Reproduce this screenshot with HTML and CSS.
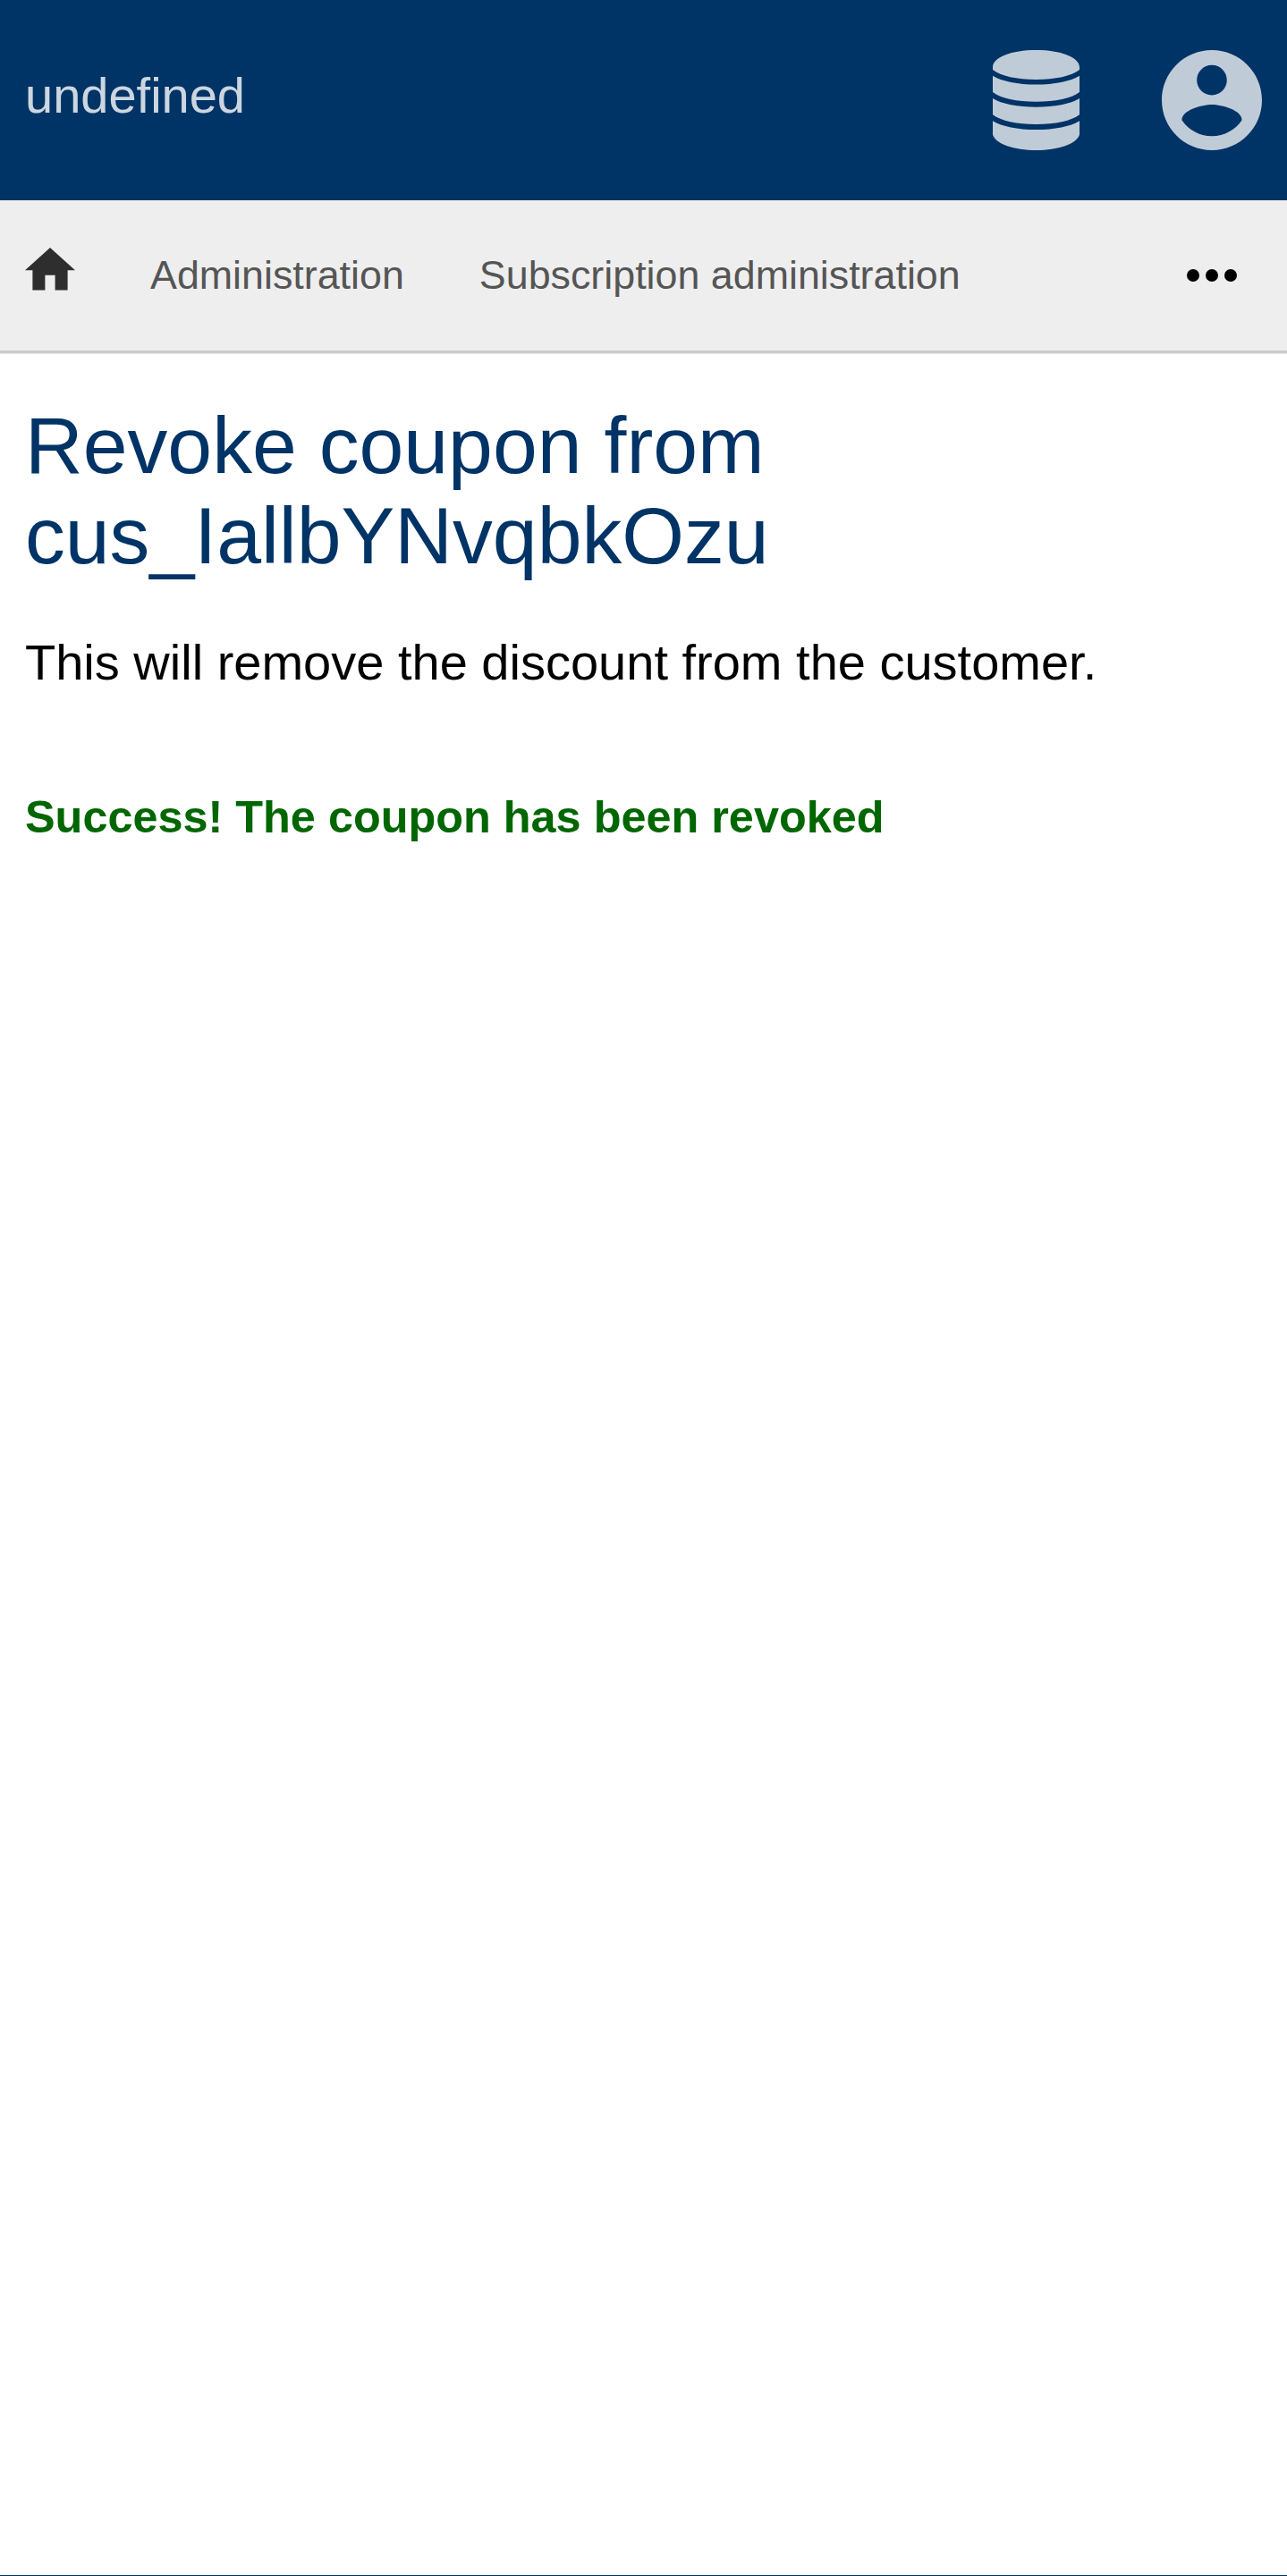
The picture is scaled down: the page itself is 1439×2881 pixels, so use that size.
FILE: index.html
```html
<!DOCTYPE html>
<html lang="en">
<head>
<meta charset="utf-8">
<title>Revoke coupon</title>
<link rel="stylesheet" href="styles.css">
</head>
<body>
<header class="header">
  <a class="brand">undefined</a>
  <div class="menus">
    <svg class="database" viewBox="0 0 97 112"><path d="M0 19C0 8 21 0 48.500 0S97 8 97 19V22C88 29 70 33 48.500 33S9 29 0 22ZM0 28.700C10 35 28 38.500 48.500 38.500S87 35 97 28.700V47C88 54 70 57.800 48.500 57.800S9 54 0 47ZM0 54C10 60.200 28 63.700 48.500 63.700S87 60.200 97 54V72.200C88 79 70 83 48.500 83S9 79 0 72.200ZM0 79.200C10 85.400 28 89 48.500 89S87 85.400 97 79.200V94.500C94 105 73 112 48.500 112S3 105 0 94.500Z"/></svg>
    <svg class="account" viewBox="2 2 20 20"><path d="M12 2C6.480 2 2 6.480 2 12s4.480 10 10 10 10-4.480 10-10S17.520 2 12 2zm0 3c1.660 0 3 1.340 3 3s-1.340 3-3 3-3-1.340-3-3 1.340-3 3-3zm0 14.200c-2.500 0-4.710-1.280-6-3.220.03-1.990 4-3.080 6-3.080 1.990 0 5.970 1.090 6 3.080-1.290 1.940-3.500 3.220-6 3.220z"/></svg>
  </div>
</header>
<nav class="navigation">
  <svg class="home" viewBox="2 3 20 17"><path d="M10 20v-6h4v6h5v-8h3L12 3 2 12h3v8z"/></svg>
  <a class="crumb">Administration</a>
  <a class="crumb">Subscription administration</a>
  <svg class="more" viewBox="0 0 24 24"><circle cx="6" cy="12" r="2"/><circle cx="12" cy="12" r="2"/><circle cx="18" cy="12" r="2"/></svg>
</nav>
<main class="content">
  <h1 class="title">Revoke coupon from cus_IallbYNvqbkOzu</h1>
  <p class="description">This will remove the discount from the customer.</p>
  <p class="success">Success! The coupon has been revoked</p>
</main>
<footer class="footer"></footer>
</body>
</html>
```
FILE: styles.css
```css
* { box-sizing: border-box; }

body {
  margin: 0;
  height: 2881px;
  display: flex;
  flex-direction: column;
  background: #fff;
  color: #000;
  font-family: "Liberation Sans", Arial, sans-serif;
}

svg { display: block; flex: none; }

.header {
  height: 224px;
  padding: 56px 28.500px 0 28px;
  display: flex;
  justify-content: space-between;
  align-items: flex-start;
  background: #036;
}

.brand {
  padding-top: 18.500px;
  color: rgba(255, 255, 255, .8);
  font-size: 56px;
  line-height: 64px;
}

.menus {
  display: flex;
  gap: 92px;
  fill: #fff;
  opacity: .75;
}

.database { width: 97px; height: 112px; }
.account { width: 112px; height: 112px; }

.navigation {
  height: 171px;
  padding: 42px 42.500px 0 28px;
  display: flex;
  align-items: flex-start;
  background: #eee;
  border-bottom: 3px solid #ccc;
}

.home {
  width: 56px;
  height: 47.600px;
  margin-top: 11.400px;
  fill: #2e2e2e;
}

.crumb {
  margin: 12.500px 0 0 84px;
  color: #555;
  font-size: 44.800px;
  line-height: 56px;
}

.more { width: 84px; height: 84px; margin-left: auto; }

.content {
  flex: 1;
  padding: 51.500px 28px 0;
  border-top: 1px solid #e6e6e6;
}

.title {
  width: 900px;
  margin: 0;
  color: #036;
  font-size: 89.600px;
  font-weight: 400;
  line-height: 101px;
}

.description {
  margin: 59px 0 0;
  font-size: 56px;
  line-height: 64px;
}

.success {
  margin: 112px 0 0;
  color: #060;
  font-size: 50.400px;
  font-weight: 700;
  line-height: 58px;
}

.footer { height: 1px; background: #036; }
```
